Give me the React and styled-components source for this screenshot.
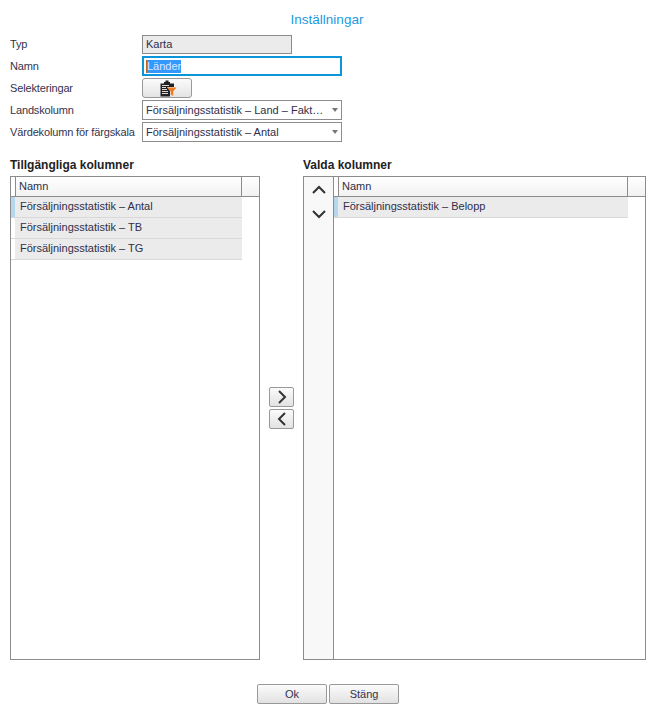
import React from 'react';
import styled, { createGlobalStyle } from 'styled-components';

const Global = createGlobalStyle`
  html, body { margin: 0; padding: 0; background: #fff; }
  body { font-family: "Liberation Sans", Arial, sans-serif; font-size: 11px; color: #2f2f4a; }
`;

const Page = styled.div`
  width: 659px;
  height: 717px;
  padding: 11px 13px 0 10px;
  box-sizing: border-box;
  display: flex;
  flex-direction: column;
`;

const Title = styled.h1`
  margin: 0 0 5px;
  height: 18px;
  font-size: 13.5px;
  line-height: 17px;
  font-weight: 400;
  text-align: center;
  color: #1b9ae0;
  padding-right: 2px;
`;

const Form = styled.div`
  display: grid;
  grid-template-columns: 132px 200px;
  grid-auto-rows: 20px;
  row-gap: 2px;
  align-items: center;
`;

const Label = styled.label`
  line-height: 20px;
  white-space: nowrap;
  color: #33334d;
  letter-spacing: -0.15px;
`;

const ReadOnly = styled.div`
  width: 150px;
  height: 19px;
  box-sizing: border-box;
  border: 1px solid #8c8c8c;
  background: #ebebeb;
  padding-left: 3px;
  line-height: 17px;
`;

const NameField = styled.div`
  height: 20px;
  box-sizing: border-box;
  border: 2px solid #0a96d8;
  padding-left: 2px;
  line-height: 16px;
  display: flex;
  align-items: center;
`;

const Selected = styled.span`
  background: #3399ff;
  color: #dfe9ff;
  line-height: 13px;
  border-left: 1px solid #b5651d;
`;

const IconButton = styled.button`
  width: 50px;
  height: 20px;
  padding: 0 0 0 2px;
  box-sizing: border-box;
  border: 1px solid #999;
  border-radius: 3px;
  background: linear-gradient(#fbfbfb, #e4e4e4);
  display: flex;
  align-items: center;
  justify-content: center;
`;

const Select = styled.div`
  height: 20px;
  box-sizing: border-box;
  border: 1px solid #8c8c8c;
  padding: 0 3px 0 3px;
  display: flex;
  align-items: center;
  justify-content: space-between;
  background: #fff;
  white-space: nowrap;
`;

const Caret = styled.span`
  width: 0;
  height: 0;
  border-left: 3.5px solid transparent;
  border-right: 3.5px solid transparent;
  border-top: 4px solid #777;
`;

const Columns = styled.div`
  margin-top: 14px;
  display: grid;
  grid-template-columns: 250px 43px 343px;
  grid-template-rows: 20px 484px;
`;

const Heading = styled.h2`
  margin: 0;
  font-size: 12px;
  line-height: 19px;
  font-weight: 700;
  color: #222;
  grid-column: ${p => p.$col};
`;

const ListBox = styled.div`
  border: 1px solid #8c8c8c;
  box-sizing: border-box;
  display: flex;
  grid-column: ${p => p.$col};
  background: #fff;
`;

const MoveBar = styled.div`
  width: 30px;
  flex-shrink: 0;
  box-sizing: border-box;
  background: #f8f8f8;
  border-right: 1px solid #8c8c8c;
  display: flex;
  flex-direction: column;
  align-items: center;
  gap: 6px;
  padding: 4px 0 0 0;
`;

const Table = styled.div`
  flex: 1;
  min-width: 0;
`;

const HeadRow = styled.div`
  height: 20px;
  box-sizing: border-box;
  border-bottom: 1px solid #8c8c8c;
  display: flex;
  background: linear-gradient(#fff, #f2f2f2);
`;

const HeadGutter = styled.div`
  width: 4px;
  background: #fff;
  border-right: 1px solid #8c8c8c;
`;

const HeadCell = styled.div`
  flex: 1;
  padding-left: 3px;
  line-height: 18px;
  border-right: 1px solid #8c8c8c;
`;

const HeadEnd = styled.div`
  width: 17px;
`;

const Row = styled.div`
  height: 20px;
  margin-right: 17px;
  margin-bottom: 1px;
  display: flex;
  background: #ebebeb;
  box-shadow: 0 1px 0 #d8d8d8;
`;

const RowMarker = styled.div`
  width: 4px;
  flex-shrink: 0;
  background: ${p => (p.$active ? '#b4d9ee' : '#fff')};
`;

const RowText = styled.div`
  padding-left: 5px;
  line-height: 19px;
`;

const Middle = styled.div`
  display: flex;
  flex-direction: column;
  align-items: flex-start;
  justify-content: center;
  gap: 2px;
  padding: 0 0 21px 9px;
  box-sizing: border-box;
  height: 100%;
  grid-column: 2;
`;

const ArrowButton = styled.button`
  width: 25px;
  height: 20px;
  padding: 0;
  box-sizing: border-box;
  border: 1px solid #999;
  border-radius: 2px;
  background: linear-gradient(#fbfbfb, #e2e2e2);
  display: flex;
  align-items: center;
  justify-content: center;
`;

const PlainArrow = styled.button`
  width: 20px;
  height: 18px;
  padding: 0;
  border: 0;
  background: none;
  display: flex;
  align-items: center;
  justify-content: center;
`;

const Footer = styled.div`
  margin-top: 24px;
  display: flex;
  justify-content: center;
  gap: 2px;
`;

const FootButton = styled.button`
  width: 70px;
  height: 20px;
  padding: 0;
  box-sizing: border-box;
  border: 1px solid #999;
  border-radius: 2px;
  background: linear-gradient(#fbfbfb, #e2e2e2);
  font: inherit;
  color: #33334d;
  line-height: 18px;
`;

const Chevron = ({ d, w = 14, h = 10 }) => (
  <svg width={w} height={h} viewBox={`0 0 ${w} ${h}`} fill="none">
    <path d={d} stroke="#333" strokeWidth="2" />
  </svg>
);

const SelectionIcon = () => (
  <svg width="17" height="17" viewBox="0 0 17 17">
    <path d="M0.5 3.5H4V2H5.5V0.5H8.5V2H10V3.5H14V7H7L10 11V16.5H0.5Z" fill="#222" />
    <path d="M2 5.5H9M2 7.5H6M2 9.5H7M2 11.5H8M2 13.5H8" stroke="#d9d9d9" strokeWidth="1" />
    <path d="M7 7.5H16.5L13.2 11.5V16L10.8 14.5V11.5Z" fill="#ee7a22" />
  </svg>
);

const available = ['Försäljningsstatistik – Antal', 'Försäljningsstatistik – TB', 'Försäljningsstatistik – TG'];

const ColumnTable = ({ rows }) => (
  <Table>
    <HeadRow>
      <HeadGutter />
      <HeadCell>Namn</HeadCell>
      <HeadEnd />
    </HeadRow>
    {rows.map((r, i) => (
      <Row key={r}>
        <RowMarker $active={i === 0} />
        <RowText>{r}</RowText>
      </Row>
    ))}
  </Table>
);

export default function App() {
  return (
    <Page>
      <Global />
      <Title>Inställningar</Title>
      <Form>
        <Label>Typ</Label>
        <ReadOnly>Karta</ReadOnly>
        <Label>Namn</Label>
        <NameField><Selected>Länder</Selected></NameField>
        <Label>Selekteringar</Label>
        <IconButton><SelectionIcon /></IconButton>
        <Label>Landskolumn</Label>
        <Select>Försäljningsstatistik – Land – Fakt…<Caret /></Select>
        <Label>Värdekolumn för färgskala</Label>
        <Select>Försäljningsstatistik – Antal<Caret /></Select>
      </Form>
      <Columns>
        <Heading $col={1}>Tillgängliga kolumner</Heading>
        <Heading $col={3}>Valda kolumner</Heading>
        <ListBox $col={1}>
          <ColumnTable rows={available} />
        </ListBox>
        <Middle>
          <ArrowButton><Chevron d="M4 1L10 7L4 13" w={14} h={14} /></ArrowButton>
          <ArrowButton><Chevron d="M10 1L4 7L10 13" w={14} h={14} /></ArrowButton>
        </Middle>
        <ListBox $col={3}>
          <MoveBar>
            <PlainArrow><Chevron d="M1 8L7 2L13 8" /></PlainArrow>
            <PlainArrow><Chevron d="M1 2L7 8L13 2" /></PlainArrow>
          </MoveBar>
          <ColumnTable rows={['Försäljningsstatistik – Belopp']} />
        </ListBox>
      </Columns>
      <Footer>
        <FootButton>Ok</FootButton>
        <FootButton>Stäng</FootButton>
      </Footer>
    </Page>
  );
}
